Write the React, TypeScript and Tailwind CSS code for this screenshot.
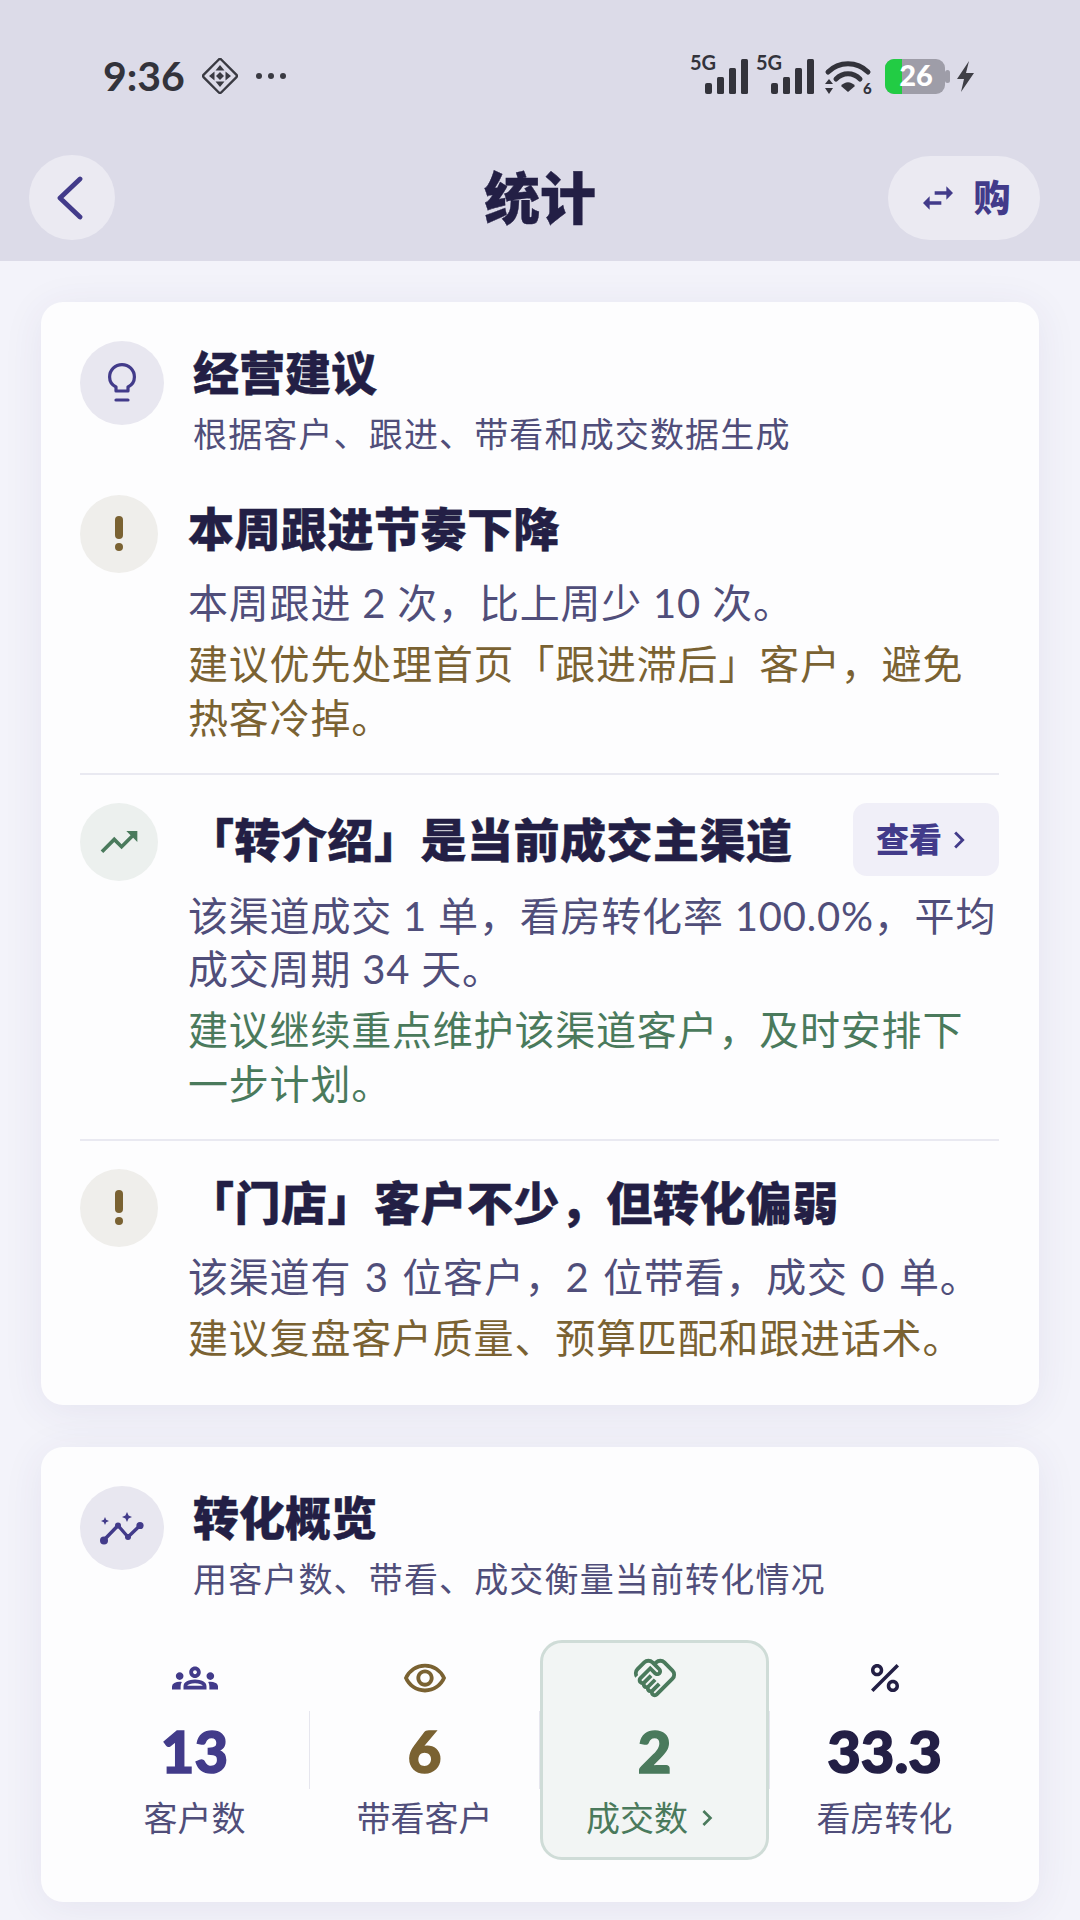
import React from 'react';
import {
  MdChevronRight,
  MdOutlineGroups,
  MdOutlineHandshake,
  MdOutlineRemoveRedEye,
  MdPercent,
  MdSwapHoriz,
  MdTrendingUp,
} from 'react-icons/md';

const SignalIcon = () => (
  <svg width="58" height="43" viewBox="0 -4 58 43" fill="#33333b">
    <text x="0" y="11" fontSize="20" fontWeight="700" fontFamily="Lato, sans-serif">5G</text>
    <rect x="15" y="24" width="7" height="11" rx="2" />
    <rect x="27" y="18" width="7" height="17" rx="1.5" />
    <rect x="39" y="9" width="7" height="26" rx="1.5" />
    <rect x="51" y="0" width="7" height="35" rx="1.5" />
  </svg>
);

const WifiIcon = () => (
  <svg className="overflow-visible" width="48" height="35" viewBox="0 0 48 35" fill="none">
    <path d="M3 13C14 2 32 2 43 13" stroke="#33333b" strokeWidth="5" strokeLinecap="round" />
    <path d="M11 20C18 13 28 13 35 20" stroke="#33333b" strokeWidth="5" strokeLinecap="round" />
    <path d="M16 27C20 22 26 22 30 27L23 33Z" fill="#33333b" />
    <path d="M4 20L0 25H8ZM4 35L0 29H8Z" fill="#33333b" />
    <text x="38" y="35" fontSize="15" fontWeight="900" fill="#33333b" fontFamily="Lato, sans-serif">6</text>
  </svg>
);

const BatteryIcon = () => (
  <svg width="65" height="35" viewBox="0 0 65 35">
    <rect x="60" y="11" width="5" height="13" rx="2.500" fill="#9e9da8" />
    <rect x="0" y="0" width="60" height="35" rx="9" fill="#9e9da8" />
    <path d="M9 0H17V35H9A9 9 0 0 1 0 26V9A9 9 0 0 1 9 0Z" fill="#22cc44" />
    <text x="31" y="27" textAnchor="middle" fontSize="29" fontWeight="900" fill="#fff" fontFamily="Lato, sans-serif">26</text>
  </svg>
);

const DiamondIcon = () => (
  <svg width="36" height="36" viewBox="0 0 36 36" fill="none">
    <rect x="5.500" y="5.500" width="25" height="25" rx="2" transform="rotate(45 18 18)" stroke="#3a3a42" strokeWidth="2.400" />
    <path d="M18 7L22.500 12.500H13.500ZM18 29L13.500 23.500H22.500ZM7 18L12.500 13.500V22.500ZM29 18L23.500 22.500V13.500ZM18 14L22 18L18 22L14 18Z" fill="#3a3a42" />
  </svg>
);

const BackIcon = () => (
  <svg width="26" height="44" viewBox="0 0 26 44" fill="none" stroke="#423b8a" strokeWidth="4.800" strokeLinecap="round" strokeLinejoin="round">
    <path d="M23 3L3 22L23 41" />
  </svg>
);

const BulbIcon = () => (
  <svg width="28" height="40" viewBox="0 0 28 40" fill="none" stroke="#423b8a" strokeWidth="3.200">
    <path d="M8 28V24C4 22 1.600 18 1.600 14A12.400 12.400 0 0 1 26.400 14C26.400 18 24 22 20 24V28Z" strokeLinejoin="round" />
    <path d="M8 37H20" strokeLinecap="round" />
  </svg>
);

const SparkLineIcon = () => (
  <svg width="44" height="34" viewBox="0 0 44 34" fill="#423b8a">
    <path d="M3.500 29.500L18 14.500L28 26L40 14.500" fill="none" stroke="#423b8a" strokeWidth="3.400" strokeLinejoin="round" />
    <circle cx="4" cy="29.500" r="4" />
    <circle cx="18" cy="14.500" r="3" />
    <circle cx="28" cy="26" r="3" />
    <circle cx="40" cy="14.500" r="3.600" />
    <path d="M5 6L6.200 8.800L9 10L6.200 11.200L5 14L3.800 11.200L1 10L3.800 8.800Z" />
    <path d="M27 1L28.600 4.400L32 6L28.600 7.600L27 11L25.400 7.600L22 6L25.400 4.400Z" />
  </svg>
);

const AlertIcon = () => (
  <svg width="14" height="36" viewBox="0 0 14 36" fill="#7a6232">
    <rect x="3" y="0" width="8" height="23" rx="4" />
    <circle cx="7" cy="31" r="4" />
  </svg>
);

type Row = {
  tone: 'warn' | 'good';
  title: string;
  body: string;
  tip: string;
  action?: boolean;
  wideSpaces?: boolean;
};

const rows: Row[] = [
  {
    tone: 'warn',
    title: '本周跟进节奏下降',
    body: '本周跟进 2 次，比上周少 10 次。',
    tip: '建议优先处理首页「跟进滞后」客户，避免热客冷掉。',
  },
  {
    tone: 'good',
    title: '「转介绍」是当前成交主渠道',
    body: '该渠道成交 1 单，看房转化率 100.0%，平均成交周期 34 天。',
    tip: '建议继续重点维护该渠道客户，及时安排下一步计划。',
    action: true,
  },
  {
    tone: 'warn',
    title: '「门店」客户不少，但转化偏弱',
    body: '该渠道有 3 位客户，2 位带看，成交 0 单。',
    tip: '建议复盘客户质量、预算匹配和跟进话术。',
    wideSpaces: true,
  },
];

const SectionHead: React.FC<{ icon: React.ReactNode; title: string; sub: string }> = ({ icon, title, sub }) => (
  <div className="flex items-start gap-[29px]">
    <div className="w-[84px] h-[84px] rounded-full bg-[#e8e7f0] flex items-center justify-center shrink-0">{icon}</div>
    <div className="pt-[4px]">
      <h2 className="text-[46px] leading-[56px] font-black [-webkit-text-stroke:0.4px_#231f45] text-[#231f45]">{title}</h2>
      <p className="mt-[10px] text-[34px] leading-[46px] tracking-[1.150px] text-[#504e7a]">{sub}</p>
    </div>
  </div>
);

const AdviceRow: React.FC<{ row: Row }> = ({ row }) => (
  <div className="flex items-start gap-[30px]">
    <div
      className={`w-[78px] h-[78px] rounded-full flex items-center justify-center shrink-0 ${
        row.tone === 'warn' ? 'bg-[#efeeeb]' : 'bg-[#ecf0ee]'
      }`}
    >
      {row.tone === 'warn' ? <AlertIcon /> : <MdTrendingUp size={44} color="#4a7a5c" />}
    </div>
    <div className="flex-1 min-w-0">
      <div className="flex items-center justify-between min-h-[68px]">
        <h3 className="text-[46px] leading-[56px] font-black tracking-[0.5px] [-webkit-text-stroke:0.4px_#231f45] text-[#231f45]">{row.title}</h3>
        {row.action && (
          <button className="w-[146px] h-[73px] rounded-[14px] bg-[#f0eff8] flex items-center justify-center text-[33px] font-black text-[#423b8a]">
            查看
            <MdChevronRight size={34} color="#423b8a" />
          </button>
        )}
      </div>
      <p className={`mt-[14px] text-[40px] leading-[53px] tracking-[0.8px] text-[#504e7a] ${row.wideSpaces ? '[word-spacing:2.5px]' : ''}`}>
        {row.body}
      </p>
      <p
        className={`mt-[7px] text-[40px] leading-[54px] tracking-[0.8px] ${
          row.tone === 'warn' ? 'text-[#7a6232]' : 'text-[#4a7a5c]'
        }`}
      >
        {row.tip}
      </p>
    </div>
  </div>
);

const Stat: React.FC<{
  icon: React.ReactNode;
  value: string;
  label: string;
  color: string;
  active?: boolean;
}> = ({ icon, value, label, color, active }) => (
  <div
    className={`flex-1 flex flex-col items-center pt-[15px] rounded-[22px] border-[3px] ${
      active ? 'relative z-10 border-[#cfdcd7] bg-[#f2f5f4]' : 'border-transparent'
    }`}
  >
    <div className="h-[40px] flex items-center justify-center">{icon}</div>
    <div className={`mt-[21px] text-[58px] leading-[64px] font-black [-webkit-text-stroke:1.5px_currentColor] ${color}`}>{value}</div>
    <div className={`mt-[12px] flex items-center text-[34px] leading-[46px] ${active ? 'text-[#4a7a5c]' : 'text-[#504e7a]'}`}>
      {label}
      {active && <MdChevronRight className="ml-[3px]" size={32} color="#4a7a5c" />}
    </div>
  </div>
);

export default function App() {
  return (
    <div className="w-[1080px] h-[1920px] overflow-hidden bg-[#f3f3fa] font-[Lato,'Noto_Sans_CJK_SC',sans-serif]">
      <header className="h-[261px] bg-[#dcdbe8]">
        <div className="h-[155px] flex items-start justify-between pt-[58px] pl-[103px] pr-[106px]">
          <div className="flex items-center h-[36px]">
            <span className="text-[41px] leading-[36px] font-bold text-[#33333b]">9:36</span>
            <span className="ml-[17px]"><DiamondIcon /></span>
            <span className="ml-[18px] flex gap-[6px]">
              <i className="w-[6px] h-[6px] rounded-full bg-[#3a3a42]" />
              <i className="w-[6px] h-[6px] rounded-full bg-[#3a3a42]" />
              <i className="w-[6px] h-[6px] rounded-full bg-[#3a3a42]" />
            </span>
          </div>
          <div className="flex items-center h-[36px]">
            <SignalIcon />
            <span className="ml-[8px]"><SignalIcon /></span>
            <span className="ml-[11px]"><WifiIcon /></span>
            <span className="ml-[12px]"><BatteryIcon /></span>
            <svg className="ml-[7px]" width="17" height="31" viewBox="0 0 17 31" fill="#3f3f46">
              <path d="M12 0L0 18H7L4 31L17 12H9Z" />
            </svg>
          </div>
        </div>
        <div className="relative h-[85px] pl-[29px] pr-[40px] flex items-center justify-between">
          <button className="w-[86px] h-[85px] rounded-full bg-[#ebeaf2] flex items-center justify-center pr-[4px]">
            <BackIcon />
          </button>
          <h1 className="absolute inset-x-0 text-center text-[56px] leading-[85px] font-black [-webkit-text-stroke:0.4px_#231f45] text-[#231f45]">统计</h1>
          <button className="relative w-[152px] h-[84px] rounded-full bg-[#ebeaf2] flex items-center justify-center gap-[16px] text-[37px] font-black text-[#423b8a]">
            <MdSwapHoriz size={40} color="#423b8a" />
            购
          </button>
        </div>
      </header>

      <main className="px-[41px] pt-[41px] flex flex-col gap-[42px]">
        <section className="bg-[#fdfdfe] rounded-[22px] shadow-[0_6px_40px_rgba(60,55,120,0.08)] pt-[39px] pb-[40px] pl-[39px] pr-[40px]">
          <SectionHead icon={<BulbIcon />} title="经营建议" sub="根据客户、跟进、带看和成交数据生成" />
          <div className="mt-[38px]">
            {rows.map((row, i) => (
              <div key={row.title}>
                {i > 0 && <div className="h-[2px] bg-[#e9e9f1] my-[28px]" />}
                <AdviceRow row={row} />
              </div>
            ))}
          </div>
        </section>

        <section className="h-[455px] bg-[#fdfdfe] rounded-[22px] shadow-[0_6px_40px_rgba(60,55,120,0.08)] pt-[39px] pl-[39px] pr-[40px]">
          <SectionHead icon={<SparkLineIcon />} title="转化概览" sub="用客户数、带看、成交衡量当前转化情况" />
          <div className="mt-[38px] h-[220px] flex items-stretch">
            <Stat icon={<MdOutlineGroups size={46} color="#423b8a" />} value="13" label="客户数" color="text-[#423b8a]" />
            <div className="w-px h-[78px] self-center bg-[#e6e6ee]" />
            <Stat icon={<MdOutlineRemoveRedEye size={46} color="#7a6232" />} value="6" label="带看客户" color="text-[#7a6232]" />
            <div className="w-px h-[78px] self-center bg-[#e6e6ee]" />
            <Stat icon={<MdOutlineHandshake size={46} color="#4a7a5c" />} value="2" label="成交数" color="text-[#4a7a5c]" active />
            <div className="w-px h-[78px] self-center bg-[#e6e6ee]" />
            <Stat icon={<MdPercent size={42} color="#231f45" />} value="33.3" label="看房转化" color="text-[#231f45]" />
          </div>
        </section>
      </main>
    </div>
  );
}
